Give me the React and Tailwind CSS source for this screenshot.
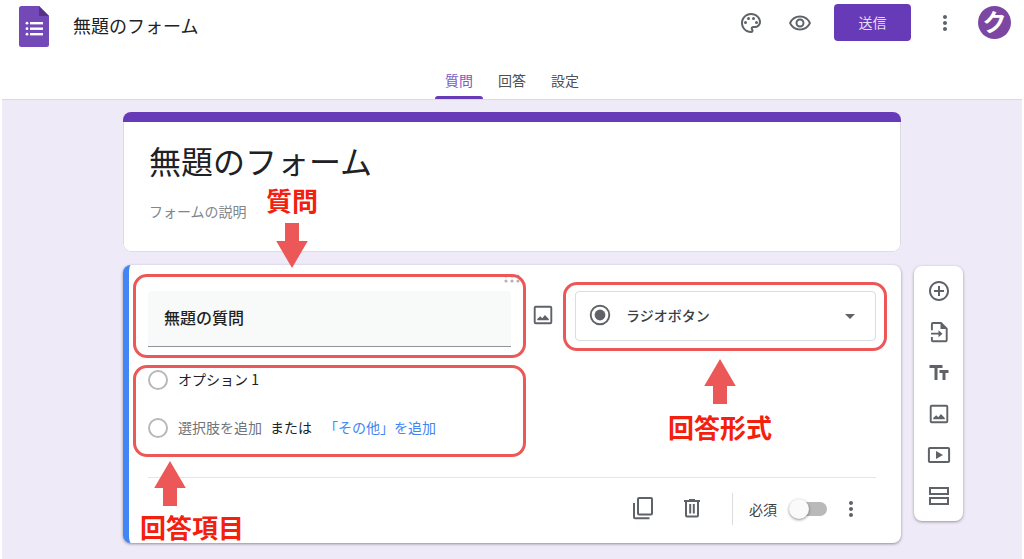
import React from "react";
import {
  MdAddCircleOutline,
  MdArrowDropDown,
  MdMoreVert,
  MdOutlinePalette,
  MdOutlineRemoveRedEye,
  MdTextFields,
} from "react-icons/md";

function FormsLogo() {
  return (
    <svg viewBox="0 0 30 41" className="h-[41px] w-[30px]" aria-hidden="true">
      <path d="M2.5 0H20l10 10v28.500a2.500 2.500 0 0 1-2.500 2.500h-25A2.500 2.500 0 0 1 0 38.500V2.500A2.500 2.500 0 0 1 2.500 0z" fill="#7349b8" />
      <path d="M20 0l10 10H20z" fill="#553487" />
      <g fill="#fff">
        <circle cx="8" cy="17.200" r="1.400" />
        <circle cx="8" cy="22.700" r="1.400" />
        <circle cx="8" cy="28.200" r="1.400" />
        <rect x="11" y="16" width="13" height="2.400" />
        <rect x="11" y="21.500" width="13" height="2.400" />
        <rect x="11" y="27" width="13" height="2.400" />
      </g>
    </svg>
  );
}

function ImageIcon() {
  return (
    <svg viewBox="0 0 24 24" className="size-6" aria-hidden="true">
      <rect x="3.700" y="3.700" width="16.600" height="16.600" rx="1" fill="none" stroke="currentColor" strokeWidth="1.900" />
      <path d="M6.200 17.200v-1.200l3-2.800 2.100 2 2.600-3.200 3.900 4v1.200z" fill="currentColor" />
    </svg>
  );
}

function ImportIcon() {
  return (
    <svg viewBox="0 0 24 24" className="size-6" aria-hidden="true">
      <path d="M4.900 10.300V4a1 1 0 0 1 1-1H14l5.700 5.700V20.300a1 1 0 0 1-1 1H5.900a1 1 0 0 1-1-1V17" fill="none" stroke="currentColor" strokeWidth="1.900" />
      <path d="M13.500 2.500l6.500 6.500h-6.500z" fill="currentColor" />
      <path d="M4 12.800h7.500v-2.600l4 3.500-4 3.500v-2.600H4z" fill="currentColor" />
    </svg>
  );
}

function VideoIcon() {
  return (
    <svg viewBox="0 0 24 24" className="size-6" aria-hidden="true">
      <rect x="1.900" y="4.900" width="20.200" height="14.200" rx="1" fill="none" stroke="currentColor" strokeWidth="2" />
      <path d="M9 8v8l7-4z" fill="currentColor" />
    </svg>
  );
}

function SectionIcon() {
  return (
    <svg viewBox="0 0 24 24" className="size-6" aria-hidden="true">
      <g fill="none" stroke="currentColor" strokeWidth="2">
        <rect x="3" y="4" width="18" height="6" />
        <rect x="3" y="14" width="18" height="6" />
      </g>
    </svg>
  );
}

function CopyIcon() {
  return (
    <svg viewBox="0 0 24 24" className="size-6" aria-hidden="true">
      <g fill="none" stroke="currentColor" strokeWidth="2">
        <rect x="7" y="1" width="14" height="16.600" rx="1" />
        <path d="M3 6v14.200a1 1 0 0 0 1 1H18.500" />
      </g>
    </svg>
  );
}

function TrashIcon() {
  return (
    <svg viewBox="0 0 24 24" className="size-6" aria-hidden="true">
      <g fill="none" stroke="currentColor" strokeWidth="2">
        <path d="M4 4h16M6 4v14.400a1 1 0 0 0 1 1h10a1 1 0 0 0 1-1V4" />
        <path d="M10.200 7v9.500M13.800 7v9.500" />
      </g>
      <path d="M9 2h6v2H9z" fill="currentColor" />
    </svg>
  );
}

function DragDots() {
  return (
    <svg viewBox="0 0 16 16" className="size-4" aria-hidden="true">
      <g fill="#b4b4b4">
        <circle cx="2" cy="6" r="1.600" />
        <circle cx="8" cy="6" r="1.600" />
        <circle cx="14" cy="6" r="1.600" />
        <circle cx="2" cy="11" r="1.600" />
        <circle cx="8" cy="11" r="1.600" />
        <circle cx="14" cy="11" r="1.600" />
      </g>
    </svg>
  );
}

function ArrowUp() {
  return (
    <svg viewBox="0 0 32 45" className="h-[45px] w-8" aria-hidden="true">
      <path d="M16 0l15.800 27H23v18H9V27H.200z" fill="#ec5858" />
    </svg>
  );
}

function ArrowDown() {
  return (
    <svg viewBox="0 0 32 45" className="h-[45px] w-8" aria-hidden="true">
      <path d="M16 45l15.800-27H23V0H9v18H.200z" fill="#ec5858" />
    </svg>
  );
}

const calloutText = "text-[26px] leading-8 font-bold whitespace-nowrap text-[#f3200d]";
const calloutBox = "pointer-events-none absolute rounded-[14px] border-3 border-[#ec5858]";
const radio = "size-5 shrink-0 appearance-none rounded-full border-2 border-[#b8b8b8] bg-white";

const tabs = ["質問", "回答", "設定"];

const tools = [
  { label: "質問を追加", icon: <MdAddCircleOutline size={24} /> },
  { label: "質問をインポート", icon: <ImportIcon /> },
  { label: "タイトルと説明を追加", icon: <MdTextFields size={24} /> },
  { label: "画像を追加", icon: <ImageIcon /> },
  { label: "動画を追加", icon: <VideoIcon /> },
  { label: "セクションを追加", icon: <SectionIcon /> },
];

function Header() {
  return (
    <header className="bg-white">
      <div className="flex items-start justify-between pt-1 pr-[13px] pl-[19px]">
        <div className="flex items-center gap-6 pt-0.5">
          <FormsLogo />
          <h1 className="pb-1 text-[18px] leading-6 text-[#202124]">無題のフォーム</h1>
        </div>
        <div className="flex items-center gap-[22px] text-[#5f6368]">
          <div className="flex items-center gap-[25px]">
            <button type="button" aria-label="テーマをカスタマイズ">
              <MdOutlinePalette size={24} />
            </button>
            <button type="button" aria-label="プレビュー">
              <MdOutlineRemoveRedEye size={24} />
            </button>
          </div>
          <button type="button" className="h-[37px] w-[77px] rounded bg-[#673ab7] pb-0.5 text-sm text-[#e6dcf5]">
            送信
          </button>
          <div className="flex items-center gap-[21px]">
            <button type="button" aria-label="その他">
              <MdMoreVert size={24} />
            </button>
            <button
              type="button"
              className="flex size-[33px] items-center justify-center rounded-full bg-[#7b47a3] pb-1 text-2xl leading-none font-bold text-white"
            >
              ク
            </button>
          </div>
        </div>
      </div>
      <nav className="mt-[15px] flex justify-center gap-[5px]">
        {tabs.map((t, i) => (
          <button
            key={t}
            type="button"
            className={
              i === 0
                ? "relative h-[37px] w-12 pb-0.5 text-sm text-[#7e57c2]"
                : "relative h-[37px] w-12 pb-0.5 text-sm text-[#4d5156]"
            }
          >
            {t}
            {i === 0 && <span className="absolute inset-x-0 bottom-0 h-[3px] rounded-t-[3px] bg-[#673ab7]" />}
          </button>
        ))}
      </nav>
    </header>
  );
}

function TitleCard() {
  return (
    <section className="col-start-2 overflow-hidden rounded-lg bg-white">
      <div className="h-[10px] bg-[#673ab7]" />
      <div className="flex flex-col rounded-b-lg border border-t-0 border-[#dddbe4] px-[25px] pt-[14px] pb-[30px]">
        <input
          aria-label="フォームのタイトル"
          defaultValue="無題のフォーム"
          className="h-12 w-full text-[32px] leading-[48px] text-[#202124] outline-none"
        />
        <input
          aria-label="フォームの説明"
          placeholder="フォームの説明"
          className="mt-[17px] h-5 w-full text-sm leading-5 text-[#202124] outline-none placeholder:text-[#80868b]"
        />
      </div>
    </section>
  );
}

function QuestionCard() {
  return (
    <section className="col-start-2 rounded-lg border-l-[6px] border-[#4285f4] bg-white pr-[25px] pl-[19px] shadow-[0_1px_3px_rgba(60,64,67,0.55)]">
      <div className="flex justify-center pt-[5px]">
        <DragDots />
      </div>

      <div className="mt-[5px] flex items-start">
        <div className="relative min-w-0 flex-[363]">
          <input
            aria-label="質問"
            defaultValue="無題の質問"
            className="h-14 w-full rounded-t border-b border-[#8f959b] bg-[#f8faf9] px-4 pb-1 text-base font-medium text-[#202124] outline-none"
          />
          <div className={calloutBox + " -top-[17px] -right-[15px] -bottom-[11px] -left-[15px]"} />
          <div className="pointer-events-none absolute bottom-[79px] left-[118px] flex flex-col items-center gap-[7px]">
            <span className={calloutText}>質問</span>
            <ArrowDown />
          </div>
        </div>
        <button type="button" aria-label="画像を追加" className="mx-5 mt-3 text-[#5f6368]">
          <ImageIcon />
        </button>
        <div className="relative min-w-0 flex-[301]">
          <select
            aria-label="回答形式"
            className="h-[50px] w-full appearance-none rounded border border-[#dadce0] bg-white pb-0.5 pl-[50px] text-sm font-medium text-[#3c4043] outline-none"
          >
            <option>ラジオボタン</option>
          </select>
          <svg viewBox="0 0 24 24" className="pointer-events-none absolute top-3 left-[13px] size-6 text-[#5f6368]" aria-hidden="true">
            <circle cx="12" cy="12" r="9.300" fill="none" stroke="currentColor" strokeWidth="1.900" />
            <circle cx="12" cy="12" r="5.400" fill="currentColor" />
          </svg>
          <MdArrowDropDown size={24} className="pointer-events-none absolute top-[13px] right-[14px] text-[#5f6368]" />
          <div className={calloutBox + " -top-[9px] -right-[11px] -bottom-[10px] -left-3"} />
          <div className="pointer-events-none absolute top-[68px] left-[93px] flex flex-col items-center gap-[7px]">
            <ArrowUp />
            <span className={calloutText}>回答形式</span>
          </div>
        </div>
      </div>

      <div className="relative mt-[21px] mr-[365px] flex flex-col gap-6 text-sm leading-6">
        <div className="flex h-6 items-center gap-[10px]">
          <input id="opt1" type="radio" name="opt" className={radio} />
          <label htmlFor="opt1" className="pb-0.5 text-[#202124]">
            オプション 1
          </label>
        </div>
        <div className="flex h-6 items-center gap-[10px]">
          <input aria-label="新しい選択肢" type="radio" name="opt" className={radio} />
          <div className="flex items-center pb-0.5 whitespace-nowrap">
            <button type="button" className="text-[#70757a]">選択肢を追加</button>
            <span className="ml-2 text-[#202124]">または</span>
            <button type="button" className="ml-3 text-[#4285f4]">「その他」を追加</button>
          </div>
        </div>
        <div className={calloutBox + " -top-[3px] -right-[15px] -bottom-[17px] -left-[15px]"} />
        <div className="pointer-events-none absolute top-[93px] -left-2 flex flex-col gap-[5px]">
          <span className="pl-[14px]">
            <ArrowUp />
          </span>
          <span className={calloutText}>回答項目</span>
        </div>
      </div>

      <div className="mt-[37px] flex items-center justify-end border-t border-[#e3e5e8] pt-[15px] pr-[13px] pb-[18px] text-[#5f6368]">
        <button type="button" aria-label="コピーを作成">
          <CopyIcon />
        </button>
        <button type="button" aria-label="削除" className="ml-[25px]">
          <TrashIcon />
        </button>
        <div className="ml-7 h-8 w-px bg-[#dadce0]" />
        <label htmlFor="required" className="ml-4 text-sm text-[#3c4043]">
          必須
        </label>
        <span className="relative ml-3 flex h-5 w-[39px] items-center">
          <input
            id="required"
            type="checkbox"
            role="switch"
            className="peer ml-1 h-[14px] w-[34px] appearance-none rounded-full bg-[#b9b9b9] checked:bg-[#b39ddb]"
          />
          <span className="pointer-events-none absolute top-0 left-0 size-5 rounded-full bg-[#fafafa] shadow-[0_1px_3px_rgba(0,0,0,0.45)] peer-checked:left-5 peer-checked:bg-[#673ab7]" />
        </span>
        <button type="button" aria-label="その他のオプション" className="ml-[11px]">
          <MdMoreVert size={24} />
        </button>
      </div>
    </section>
  );
}

export default function App() {
  return (
    <div
      lang="ja"
      className="flex min-h-screen flex-col bg-white font-['Noto_Sans_CJK_JP',sans-serif]"
    >
      <Header />
      <main className="mx-0.5 grid grow grid-cols-[1fr_minmax(0,778px)_1fr] content-start gap-y-[13px] border-t border-[#dcd9e3] bg-[#eeeaf7] pt-3 pb-4">
        <TitleCard />
        <QuestionCard />
        <aside className="col-start-3 mt-px ml-[13px] flex w-[49px] flex-col items-center gap-[17px] self-start rounded-lg bg-white py-[13px] text-[#5f6368] shadow-[0_1px_3px_rgba(60,64,67,0.5)]">
          {tools.map((t) => (
            <button key={t.label} type="button" aria-label={t.label}>
              {t.icon}
            </button>
          ))}
        </aside>
      </main>
    </div>
  );
}
